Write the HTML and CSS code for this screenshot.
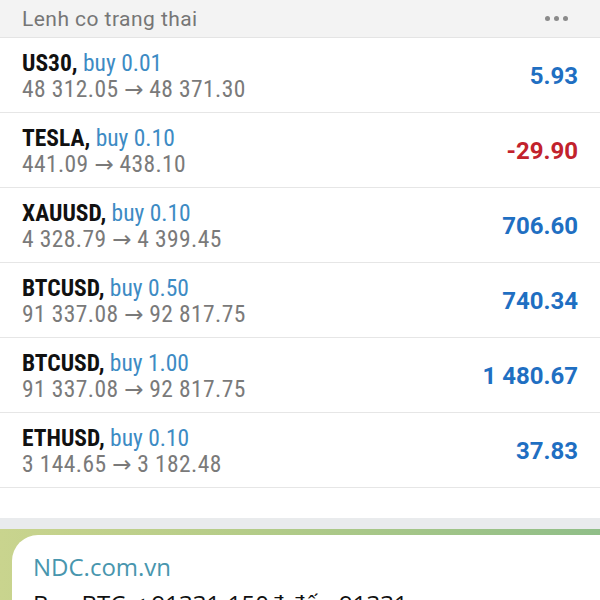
FILE: index.html
```html
<!DOCTYPE html>
<html>
<head>
<meta charset="utf-8">
<link rel="stylesheet" href="styles.css">
</head>
<body>
<div class="screen">
  <div class="header">
    <span class="header-title">Lenh co trang thai</span>
    <span class="dots"><i></i><i></i><i></i></span>
  </div>
  <div class="list">
    <div class="row">
      <div class="info">
        <div class="title"><b>US30,</b> <span class="buy">buy 0.01</span></div>
        <div class="prices">48 312.05 <span class="arrow">→</span> 48 371.30</div>
      </div>
      <div class="profit pos">5.93</div>
    </div>
    <div class="row">
      <div class="info">
        <div class="title"><b>TESLA,</b> <span class="buy">buy 0.10</span></div>
        <div class="prices">441.09 <span class="arrow">→</span> 438.10</div>
      </div>
      <div class="profit neg">-29.90</div>
    </div>
    <div class="row">
      <div class="info">
        <div class="title"><b>XAUUSD,</b> <span class="buy">buy 0.10</span></div>
        <div class="prices">4 328.79 <span class="arrow">→</span> 4 399.45</div>
      </div>
      <div class="profit pos">706.60</div>
    </div>
    <div class="row">
      <div class="info">
        <div class="title"><b>BTCUSD,</b> <span class="buy">buy 0.50</span></div>
        <div class="prices">91 337.08 <span class="arrow">→</span> 92 817.75</div>
      </div>
      <div class="profit pos">740.34</div>
    </div>
    <div class="row">
      <div class="info">
        <div class="title"><b>BTCUSD,</b> <span class="buy">buy 1.00</span></div>
        <div class="prices">91 337.08 <span class="arrow">→</span> 92 817.75</div>
      </div>
      <div class="profit pos">1 480.67</div>
    </div>
    <div class="row">
      <div class="info">
        <div class="title"><b>ETHUSD,</b> <span class="buy">buy 0.10</span></div>
        <div class="prices">3 144.65 <span class="arrow">→</span> 3 182.48</div>
      </div>
      <div class="profit pos">37.83</div>
    </div>
  </div>
  <div class="spacer"></div>
  <div class="chat">
    <div class="chat-top"></div>
    <div class="chat-bg">
      <div class="bubble">
        <div class="sender">NDC.com.vn</div>
        <div class="msg">Buy BTC &lt; 91331-150đ đến 91331</div>
      </div>
    </div>
  </div>
</div>
</body>
</html>
```
FILE: styles.css
```css
* { box-sizing: border-box; margin: 0; padding: 0; }
html, body { width: 600px; height: 600px; overflow: hidden; background: #fff; }
body { font-family: Roboto, "Liberation Sans", sans-serif; }
.screen { width: 600px; height: 600px; display: flex; flex-direction: column; }
.screen > * { flex-shrink: 0; }
.header {
  height: 38px;
  background: #f3f3f3;
  border-bottom: 1px solid #e4e4e4;
  display: flex;
  align-items: center;
  justify-content: space-between;
  padding: 0 32px 0 22px;
}
.header-title { font-size: 21px; color: #767676; letter-spacing: 0.45px; }
.dots { display: flex; gap: 4px; }
.dots i { width: 5px; height: 5px; border-radius: 50%; background: #8a8a8a; display: block; }
.row {
  height: 75px;
  border-bottom: 1.5px solid #e6e6e6;
  display: flex;
  align-items: center;
  justify-content: space-between;
  padding: 2px 22px 0 22px;
}
.title, .prices { font-size: 23.5px; line-height: 26px; font-stretch: 75%; }
.prices { letter-spacing: 0.4px; color: #7a7a7a; }
.title b { font-weight: 700; color: #111; }
.buy { color: #3d8bc4; }
.arrow { font-family: "DejaVu Sans", sans-serif; font-size: 23px; font-stretch: normal; line-height: 20px; letter-spacing: 0; }
.profit { font-size: 24px; font-weight: 700; font-stretch: 100%; }
.pos { color: #1f6fc2; }
.neg { color: #c2222c; }
.spacer { height: 30px; }
.chat { flex: 1 0 auto; display: flex; flex-direction: column; }
.chat-top { height: 11px; background: #e9ebed; }
.chat-bg {
  flex: 1;
  background: linear-gradient(90deg, #c9d48e 0%, #b5cc88 40%, #90be88 100%);
  padding: 6px 0 0 12px;
}
.bubble {
  background: #fff;
  height: 100%;
  border-top-left-radius: 26px;
  padding: 15px 0 0 21px;
  font-family: "Open Sans", "Noto Sans", sans-serif;
}
.sender { font-size: 24px; color: #4896ae; line-height: 34px; }
.msg { font-size: 24px; color: #111; line-height: 40px; }
```
